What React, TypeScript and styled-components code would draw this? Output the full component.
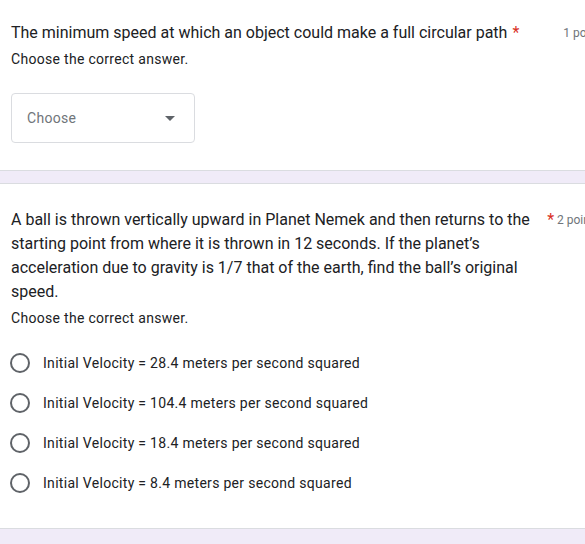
import styled, { createGlobalStyle } from "styled-components";

const GlobalStyle = createGlobalStyle`
  html, body {
    margin: 0;
    padding: 0;
    background-color: #f0ebf8;
    overflow: hidden;
  }
  * {
    box-sizing: border-box;
  }
`;

const options = [
  "Initial Velocity = 28.4 meters per second squared",
  "Initial Velocity = 104.4 meters per second squared",
  "Initial Velocity = 18.4 meters per second squared",
  "Initial Velocity = 8.4 meters per second squared",
];

function App() {
  return (
    <Page>
      <GlobalStyle />
      <Card $first>
        <Header>
          <Title>The minimum speed at which an object could make a full circular path</Title>
          <Star>*</Star>
          <Points>1 point</Points>
        </Header>
        <Hint>Choose the correct answer.</Hint>
        <Dropdown>
          <Placeholder>Choose</Placeholder>
          <Arrow />
        </Dropdown>
      </Card>
      <Gap />
      <Card>
        <Header>
          <Title>
            A ball is thrown vertically upward in Planet Nemek and then returns to the starting point
            from where it is thrown in 12 seconds. If the planet’s acceleration due to gravity is 1/7
            that of the earth, find the ball’s original speed.
          </Title>
          <Star $spaced>*</Star>
          <Points>2 points</Points>
        </Header>
        <Hint>Choose the correct answer.</Hint>
        <OptionList>
          {options.map((o) => (
            <Option key={o}>
              <Radio />
              <OptionText>{o}</OptionText>
            </Option>
          ))}
        </OptionList>
      </Card>
      <Gap />
    </Page>
  );
}

export default App;

const Page = styled.div`
  width: 620px;
  font-family: Roboto, "Liberation Sans", Arial, sans-serif;
  color: #202124;
`;

const Card = styled.div<{ $first?: boolean }>`
  background-color: white;
  border-top: ${(p) => (p.$first ? "none" : "1px solid #dadce0")};
  border-bottom: 1px solid #dadce0;
  padding: ${(p) => (p.$first ? "21px 20px 27px 11px" : "24px 20px 25px 11px")};
`;

const Gap = styled.div`
  height: 12px;
`;

const Header = styled.div`
  display: flex;
  align-items: flex-start;
`;

const Title = styled.div`
  flex: 0 1 auto;
  font-size: 16px;
  line-height: 24px;
  color: #202124;
`;

const Star = styled.span<{ $spaced?: boolean }>`
  flex: none;
  color: #d93025;
  font-size: 16px;
  line-height: 24px;
  margin-left: ${(p) => (p.$spaced ? "4px" : "5px")};
`;

const Points = styled.span`
  flex: none;
  margin-left: auto;
  padding-left: 3px;
  font-size: 12px;
  line-height: 24px;
  color: #70757a;
  white-space: nowrap;
`;

const Hint = styled.div`
  margin-top: 4px;
  font-size: 14px;
  line-height: 20px;
  letter-spacing: 0.3px;
  color: #202124;
`;

const Dropdown = styled.div`
  margin-top: 24px;
  width: 184px;
  height: 50px;
  border: 1px solid #dadce0;
  border-radius: 4px;
  display: flex;
  align-items: center;
  justify-content: space-between;
  padding: 0 19px 0 15px;
`;

const Placeholder = styled.span`
  font-size: 14px;
  letter-spacing: 0.3px;
  color: #70757a;
`;

const Arrow = styled.span`
  width: 0;
  height: 0;
  border-left: 5px solid transparent;
  border-right: 5px solid transparent;
  border-top: 5px solid #5f6368;
`;

const OptionList = styled.div`
  margin-top: 15px;
  display: flex;
  flex-direction: column;
`;

const Option = styled.div`
  height: 40px;
  display: flex;
  align-items: center;
  gap: 13px;
`;

const Radio = styled.span`
  width: 20px;
  height: 20px;
  border: 2px solid #5f6368;
  border-radius: 50%;
  flex: none;
  margin-left: -1px;
`;

const OptionText = styled.span`
  font-size: 14px;
  line-height: 20px;
  letter-spacing: 0.3px;
  color: #202124;
`;
